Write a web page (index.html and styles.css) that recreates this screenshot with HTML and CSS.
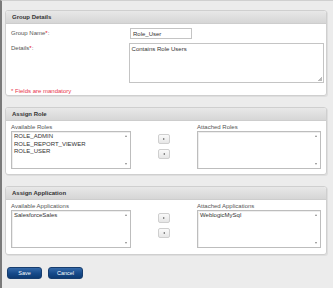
FILE: index.html
```html
<!DOCTYPE html>
<html>
<head>
    <title>Edit Group</title>
    <link rel="stylesheet" href="styles.css">
</head>
<body>
    <div class="page">
        <div class="panel panel-group">
            <div class="panel-head">Group Details</div>
            <div class="panel-body">
                <div class="form-row">
                    <label class="form-label">Group Name<span class="req">*</span>:</label>
                    <div class="text-input">Role_User</div>
                </div>
                <div class="form-row">
                    <label class="form-label">Details<span class="req">*</span>:</label>
                    <div class="text-area">Contains Role Users<span class="grip"></span></div>
                </div>
                <div class="mandatory">* Fields are mandatory</div>
            </div>
        </div>

        <div class="panel">
            <div class="panel-head">Assign Role</div>
            <div class="panel-body assign">
                <div class="list-col">
                    <div class="list-label">Available Roles</div>
                    <div class="list-box list-left">
                        <div class="list-items">
                            <div>ROLE_ADMIN</div>
                            <div>ROLE_REPORT_VIEWER</div>
                            <div>ROLE_USER</div>
                        </div>
                        <div class="scroll"><span class="up"></span><span class="down"></span></div>
                    </div>
                </div>
                <div class="move-col">
                    <button class="move-btn"><span class="arr-r"></span></button>
                    <button class="move-btn"><span class="arr-l"></span></button>
                </div>
                <div class="list-col">
                    <div class="list-label">Attached Roles</div>
                    <div class="list-box list-right">
                        <div class="list-items"></div>
                        <div class="scroll"><span class="up"></span><span class="down"></span></div>
                    </div>
                </div>
            </div>
        </div>

        <div class="panel panel-app">
            <div class="panel-head">Assign Application</div>
            <div class="panel-body assign">
                <div class="list-col">
                    <div class="list-label">Available Applications</div>
                    <div class="list-box list-left">
                        <div class="list-items">
                            <div>SalesforceSales</div>
                        </div>
                        <div class="scroll"><span class="up"></span><span class="down"></span></div>
                    </div>
                </div>
                <div class="move-col">
                    <button class="move-btn"><span class="arr-r"></span></button>
                    <button class="move-btn"><span class="arr-l"></span></button>
                </div>
                <div class="list-col">
                    <div class="list-label">Attached Applications</div>
                    <div class="list-box list-right">
                        <div class="list-items">
                            <div>WeblogicMySql</div>
                        </div>
                        <div class="scroll"><span class="up"></span><span class="down"></span></div>
                    </div>
                </div>
            </div>
        </div>

        <div class="actions">
            <button class="action-btn btn-save">Save</button>
            <button class="action-btn btn-cancel">Cancel</button>
        </div>
    </div>
</body>
</html>
```
FILE: styles.css
```css
* {
    box-sizing: border-box;
}
body {
    margin: 0;
    font-family: "Liberation Sans", Arial, sans-serif;
    font-size: 6px;
    color: #444;
    background-color: #ececec;
}
.page {
    width: 333px;
    height: 288px;
    border-left: 2px solid #7a7a7a;
    border-top: 1px solid #d0d0d0;
    padding: 9px 6px 0 3px;
}
.panel {
    background: #fff;
    border: 1px solid #cfcfcf;
    border-radius: 3px;
    margin-bottom: 11px;
    box-shadow: 1px 1px 0 #dedede;
}
.panel-app {
    margin-top: 1px;
    margin-bottom: 12px;
}
.panel-app .assign {
    padding-bottom: 6px;
}
.panel-head {
    height: 13px;
    line-height: 13px;
    padding-left: 6px;
    font-weight: bold;
    color: #333;
    background: linear-gradient(#e8e8e8, #d6d6d6);
    border-bottom: 1px solid #cdcdcd;
    border-radius: 2px 2px 0 0;
}
.panel-body {
    padding: 4px 2px 2px 5px;
}
.panel-group .panel-body {
    height: 71px;
}
.form-row {
    display: flex;
    margin-bottom: 4px;
}
.form-label {
    width: 118px;
    line-height: 9px;
    padding-top: 1px;
    color: #555;
}
.req {
    color: #e01010;
}
.text-input {
    width: 62px;
    height: 11px;
    line-height: 10px;
    padding-left: 2px;
    margin-left: 1px;
    border: 1px solid #c4c4c4;
    color: #333;
}
.text-area {
    position: relative;
    width: 196px;
    height: 40px;
    padding: 2px 2px;
    line-height: 7px;
    border: 1px solid #c4c4c4;
    color: #333;
}
.grip {
    position: absolute;
    right: 1px;
    bottom: 1px;
    width: 4px;
    height: 4px;
    background: linear-gradient(135deg, transparent 50%, #bbb 50%);
}
.mandatory {
    color: #e8344a;
    line-height: 8px;
    margin-top: 1px;
}
.assign {
    display: flex;
    padding: 3px 5px 5px 5px;
}
.list-label {
    line-height: 7px;
    color: #555;
}
.list-box {
    display: flex;
    height: 38px;
    border: 1px solid #bdbdbd;
    box-shadow: inset 1px 1px 0 #eee;
}
.list-left {
    width: 120px;
}
.list-right {
    width: 124px;
}
.list-items {
    flex: 1;
    padding: 1px 2px;
    line-height: 7.5px;
    color: #333;
}
.scroll {
    width: 9px;
    display: flex;
    flex-direction: column;
    justify-content: space-between;
    align-items: center;
    padding: 3px 0;
}
.up {
    border-left: 1.5px solid transparent;
    border-right: 1.5px solid transparent;
    border-bottom: 2px solid #888;
}
.down {
    border-left: 1.5px solid transparent;
    border-right: 1.5px solid transparent;
    border-top: 2px solid #888;
}
.move-col {
    width: 66px;
    display: flex;
    flex-direction: column;
    align-items: center;
    gap: 5px;
    padding-top: 10px;
}
.move-btn {
    width: 12px;
    height: 10px;
    padding: 0;
    border: 1px solid #cfcfcf;
    border-radius: 2px;
    background: linear-gradient(#fafafa, #e6e6e6);
    display: flex;
    align-items: center;
    justify-content: center;
}
.arr-r {
    border-top: 1.5px solid transparent;
    border-bottom: 1.5px solid transparent;
    border-left: 2px solid #666;
}
.arr-l {
    border-top: 1.5px solid transparent;
    border-bottom: 1.5px solid transparent;
    border-right: 2px solid #666;
}
.actions {
    display: flex;
    gap: 6px;
    padding-left: 2px;
}
.action-btn {
    height: 12px;
    padding: 0;
    font-family: "Liberation Sans", Arial, sans-serif;
    font-size: 5.5px;
    color: #fff;
    border: 1px solid #173d6e;
    border-radius: 3px;
    background: linear-gradient(#3569a8, #164a8a 55%, #0d3a72);
}
.btn-save {
    width: 35px;
}
.btn-cancel {
    width: 35px;
}
```
